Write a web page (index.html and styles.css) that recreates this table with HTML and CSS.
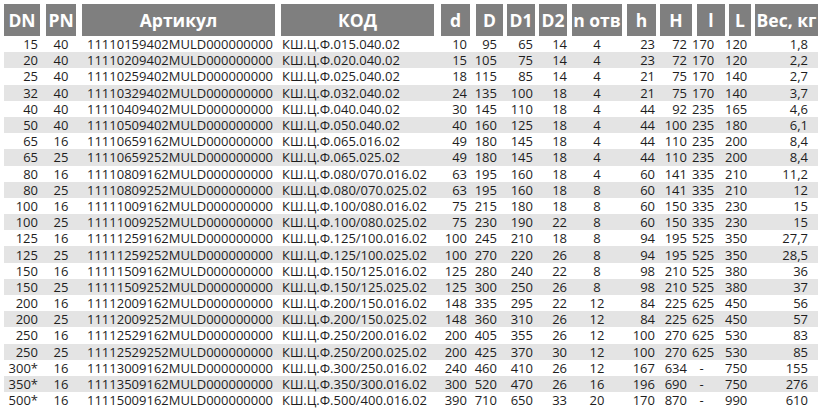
FILE: index.html
```html
<!DOCTYPE html>
<html lang="ru">
<head>
<meta charset="utf-8">
<title>Таблица</title>
<link rel="stylesheet" href="styles.css">
</head>
<body>
<table class="spec">
<colgroup>
<col class="c-dn"><col class="c-pn"><col class="c-art"><col class="c-kod"><col class="c-d"><col class="c-D"><col class="c-D1"><col class="c-D2"><col class="c-n"><col class="c-h"><col class="c-H"><col class="c-l"><col class="c-L"><col class="c-w">
</colgroup>
<thead>
<tr><th class="first">DN</th><th>PN</th><th>Артикул</th><th>КОД</th><th>d</th><th>D</th><th>D1</th><th>D2</th><th>n отв</th><th>h</th><th>H</th><th>l</th><th>L</th><th>Вес, кг</th></tr>
</thead>
<tbody>
<tr><td>15</td><td>40</td><td>11110159402MULD000000000</td><td>КШ.Ц.Ф.015.040.02</td><td>10</td><td>95</td><td>65</td><td>14</td><td>4</td><td>23</td><td>72</td><td>170</td><td>120</td><td>1,8</td></tr>
<tr><td>20</td><td>40</td><td>11110209402MULD000000000</td><td>КШ.Ц.Ф.020.040.02</td><td>15</td><td>105</td><td>75</td><td>14</td><td>4</td><td>23</td><td>72</td><td>170</td><td>120</td><td>2,2</td></tr>
<tr><td>25</td><td>40</td><td>11110259402MULD000000000</td><td>КШ.Ц.Ф.025.040.02</td><td>18</td><td>115</td><td>85</td><td>14</td><td>4</td><td>21</td><td>75</td><td>170</td><td>140</td><td>2,7</td></tr>
<tr><td>32</td><td>40</td><td>11110329402MULD000000000</td><td>КШ.Ц.Ф.032.040.02</td><td>24</td><td>135</td><td>100</td><td>18</td><td>4</td><td>21</td><td>75</td><td>170</td><td>140</td><td>3,7</td></tr>
<tr><td>40</td><td>40</td><td>11110409402MULD000000000</td><td>КШ.Ц.Ф.040.040.02</td><td>30</td><td>145</td><td>110</td><td>18</td><td>4</td><td>44</td><td>92</td><td>235</td><td>165</td><td>4,6</td></tr>
<tr><td>50</td><td>40</td><td>11110509402MULD000000000</td><td>КШ.Ц.Ф.050.040.02</td><td>40</td><td>160</td><td>125</td><td>18</td><td>4</td><td>44</td><td>100</td><td>235</td><td>180</td><td>6,1</td></tr>
<tr><td>65</td><td>16</td><td>11110659162MULD000000000</td><td>КШ.Ц.Ф.065.016.02</td><td>49</td><td>180</td><td>145</td><td>18</td><td>4</td><td>44</td><td>110</td><td>235</td><td>200</td><td>8,4</td></tr>
<tr><td>65</td><td>25</td><td>11110659252MULD000000000</td><td>КШ.Ц.Ф.065.025.02</td><td>49</td><td>180</td><td>145</td><td>18</td><td>4</td><td>44</td><td>110</td><td>235</td><td>200</td><td>8,4</td></tr>
<tr><td>80</td><td>16</td><td>11110809162MULD000000000</td><td>КШ.Ц.Ф.080/070.016.02</td><td>63</td><td>195</td><td>160</td><td>18</td><td>4</td><td>60</td><td>141</td><td>335</td><td>210</td><td>11,2</td></tr>
<tr><td>80</td><td>25</td><td>11110809252MULD000000000</td><td>КШ.Ц.Ф.080/070.025.02</td><td>63</td><td>195</td><td>160</td><td>18</td><td>8</td><td>60</td><td>141</td><td>335</td><td>210</td><td>12</td></tr>
<tr><td>100</td><td>16</td><td>11111009162MULD000000000</td><td>КШ.Ц.Ф.100/080.016.02</td><td>75</td><td>215</td><td>180</td><td>18</td><td>8</td><td>60</td><td>150</td><td>335</td><td>230</td><td>15</td></tr>
<tr><td>100</td><td>25</td><td>11111009252MULD000000000</td><td>КШ.Ц.Ф.100/080.025.02</td><td>75</td><td>230</td><td>190</td><td>22</td><td>8</td><td>60</td><td>150</td><td>335</td><td>230</td><td>15</td></tr>
<tr><td>125</td><td>16</td><td>11111259162MULD000000000</td><td>КШ.Ц.Ф.125/100.016.02</td><td>100</td><td>245</td><td>210</td><td>18</td><td>8</td><td>94</td><td>195</td><td>525</td><td>350</td><td>27,7</td></tr>
<tr><td>125</td><td>25</td><td>11111259252MULD000000000</td><td>КШ.Ц.Ф.125/100.025.02</td><td>100</td><td>270</td><td>220</td><td>26</td><td>8</td><td>94</td><td>195</td><td>525</td><td>350</td><td>28,5</td></tr>
<tr><td>150</td><td>16</td><td>11111509162MULD000000000</td><td>КШ.Ц.Ф.150/125.016.02</td><td>125</td><td>280</td><td>240</td><td>22</td><td>8</td><td>98</td><td>210</td><td>525</td><td>380</td><td>36</td></tr>
<tr><td>150</td><td>25</td><td>11111509252MULD000000000</td><td>КШ.Ц.Ф.150/125.025.02</td><td>125</td><td>300</td><td>250</td><td>26</td><td>8</td><td>98</td><td>210</td><td>525</td><td>380</td><td>37</td></tr>
<tr><td>200</td><td>16</td><td>11112009162MULD000000000</td><td>КШ.Ц.Ф.200/150.016.02</td><td>148</td><td>335</td><td>295</td><td>22</td><td>12</td><td>84</td><td>225</td><td>625</td><td>450</td><td>56</td></tr>
<tr><td>200</td><td>25</td><td>11112009252MULD000000000</td><td>КШ.Ц.Ф.200/150.025.02</td><td>148</td><td>360</td><td>310</td><td>26</td><td>12</td><td>84</td><td>225</td><td>625</td><td>450</td><td>57</td></tr>
<tr><td>250</td><td>16</td><td>11112529162MULD000000000</td><td>КШ.Ц.Ф.250/200.016.02</td><td>200</td><td>405</td><td>355</td><td>26</td><td>12</td><td>100</td><td>270</td><td>625</td><td>530</td><td>83</td></tr>
<tr><td>250</td><td>25</td><td>11112529252MULD000000000</td><td>КШ.Ц.Ф.250/200.025.02</td><td>200</td><td>425</td><td>370</td><td>30</td><td>12</td><td>100</td><td>270</td><td>625</td><td>530</td><td>85</td></tr>
<tr><td>300*</td><td>16</td><td>11113009162MULD000000000</td><td>КШ.Ц.Ф.300/250.016.02</td><td>240</td><td>460</td><td>410</td><td>26</td><td>12</td><td>167</td><td>634</td><td>-</td><td>750</td><td>155</td></tr>
<tr><td>350*</td><td>16</td><td>11113509162MULD000000000</td><td>КШ.Ц.Ф.350/300.016.02</td><td>300</td><td>520</td><td>470</td><td>26</td><td>16</td><td>196</td><td>690</td><td>-</td><td>750</td><td>276</td></tr>
<tr><td>500*</td><td>16</td><td>11115009162MULD000000000</td><td>КШ.Ц.Ф.500/400.016.02</td><td>390</td><td>710</td><td>650</td><td>33</td><td>20</td><td>170</td><td>870</td><td>-</td><td>990</td><td>610</td></tr>
</tbody>
</table>
</body>
</html>
```
FILE: styles.css
```css
html, body {
  margin: 0;
  padding: 0;
  background: #ffffff;
}
body {
  padding: 4px 4px 0 4px;
  font-family: "Open Sans", "Noto Sans", sans-serif;
  color: #1e1e1e;
}
.spec {
  table-layout: fixed;
  width: 814px;
  border-collapse: separate;
  border-spacing: 0;
}
.c-dn { width: 36px; }
.c-pn { width: 36px; }
.c-art { width: 199px; }
.c-kod { width: 159px; }
.c-d { width: 36px; }
.c-D { width: 33px; }
.c-D1 { width: 32px; }
.c-D2 { width: 32px; }
.c-n { width: 55px; }
.c-h { width: 34px; }
.c-H { width: 36px; }
.c-l { width: 33px; }
.c-L { width: 26px; }
.c-w { width: 67px; }

.spec th {
  height: 32px;
  padding: 0;
  background: #7f7f7f;
  background-clip: padding-box;
  color: #ffffff;
  font-weight: 700;
  font-size: 17.5px;
  text-align: center;
  vertical-align: middle;
  border-left: 6px solid #ffffff;
  white-space: nowrap;
}
.spec th.first { border-left: 0; }
.spec th:nth-child(5) { border-left-width: 7px; }
.spec th:nth-child(7),
.spec th:nth-child(8),
.spec th:nth-child(11),
.spec th:nth-child(13),
.spec th:nth-child(14) { border-left-width: 4px; }
.spec th:nth-child(9),
.spec th:nth-child(10),
.spec th:nth-child(12) { border-left-width: 5px; }

.spec td {
  height: 16.2px;
  padding: 0;
  font-size: 13px;
  line-height: 16px;
  white-space: nowrap;
  text-align: right;
  vertical-align: middle;
}
.spec tbody tr:nth-child(even) td { background: #e4e4e4; }

.spec td:nth-child(1) { padding-right: 2px; }
.spec td:nth-child(2) { text-align: center; padding-left: 6px; }
.spec td:nth-child(3) { text-align: left; padding-left: 11px; }
.spec td:nth-child(4) { text-align: left; padding-left: 7px; }
.spec td:nth-child(5) { padding-right: 3px; }
.spec td:nth-child(6) { padding-right: 6px; }
.spec td:nth-child(7) { padding-right: 2px; }
.spec td:nth-child(8) { padding-right: 0; }
.spec td:nth-child(9) { text-align: center; padding-left: 5px; }
.spec td:nth-child(10) { padding-right: 1px; }
.spec td:nth-child(11) { padding-right: 5px; }
.spec td:nth-child(12) { text-align: center; padding-right: 14px; }
.spec td:nth-child(13) { text-align: left; padding-left: 0; }
.spec td:nth-child(14) { padding-right: 10px; }
```
